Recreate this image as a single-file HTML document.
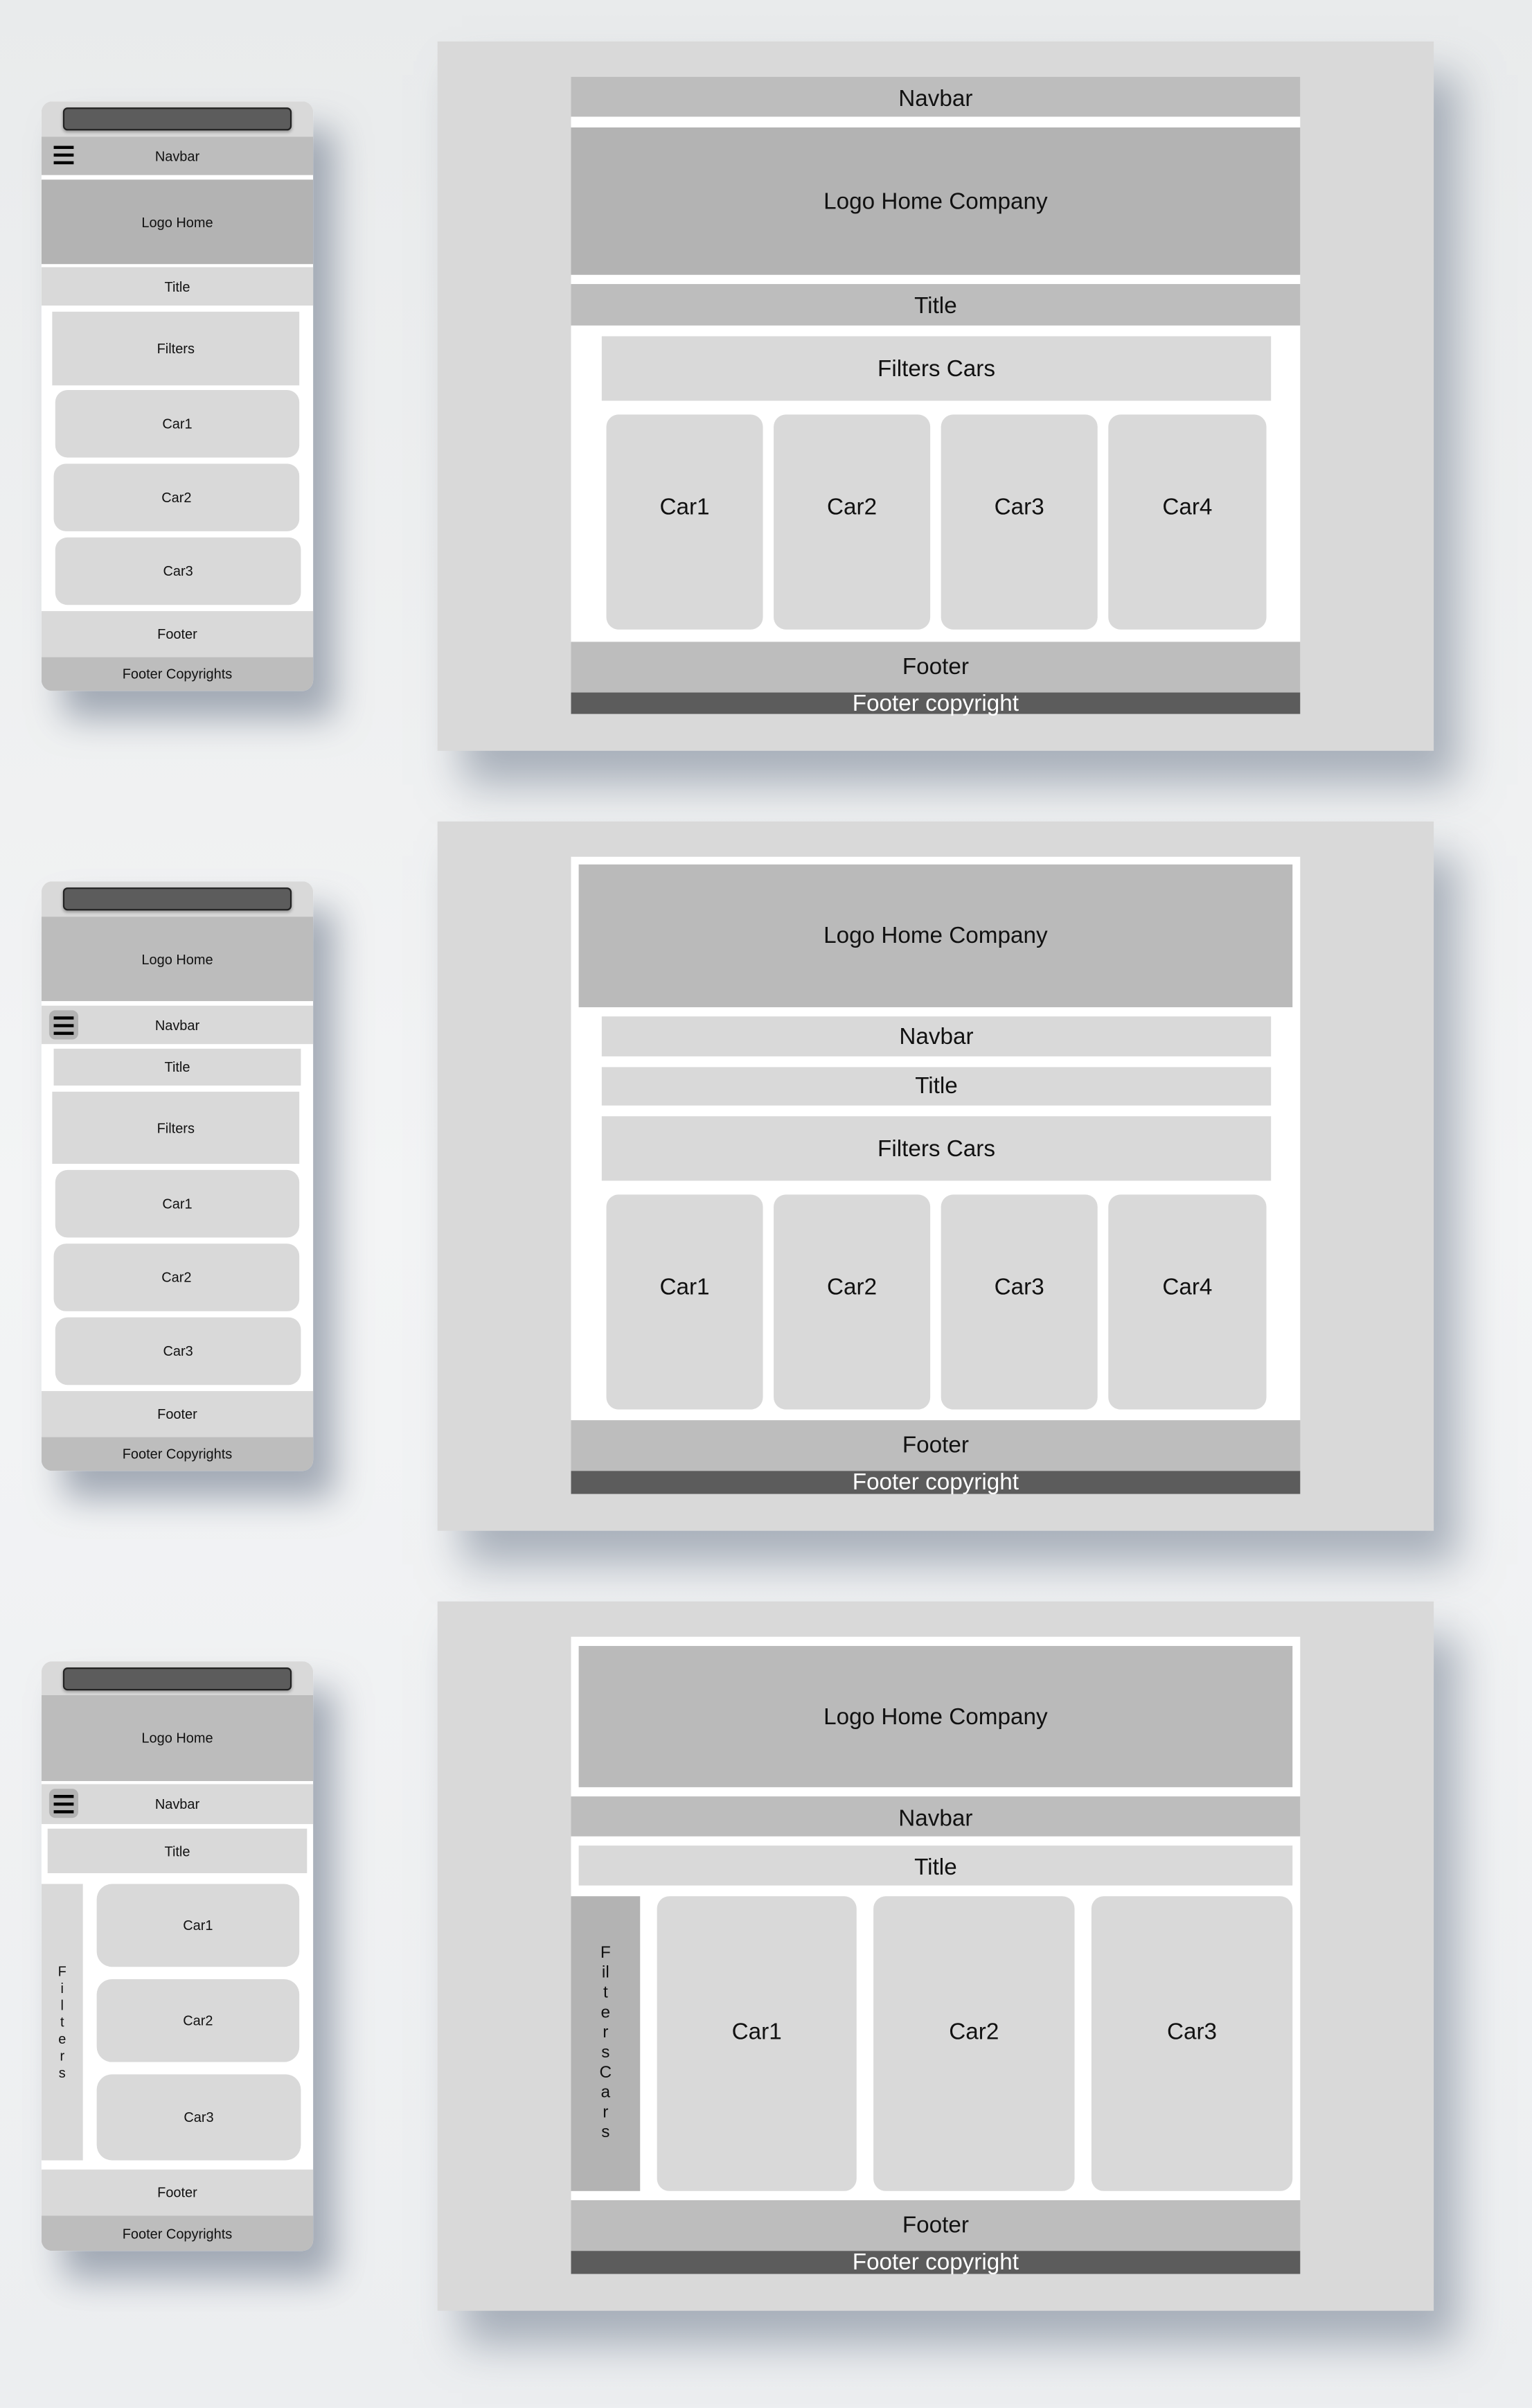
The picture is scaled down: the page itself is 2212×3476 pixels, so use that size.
<!DOCTYPE html>
<html><head><meta charset="utf-8"><style>
html,body{margin:0;padding:0;}
body{width:2212px;height:3476px;overflow:hidden;background:#eef0f1;font-family:"Liberation Sans",sans-serif;}
#s{position:absolute;left:0;top:0;width:998px;height:1568px;transform:scale(2.2164);transform-origin:0 0;background:linear-gradient(180deg,#e9ebec,#f3f4f5 50%,#eceef0);}
.a{position:absolute;box-sizing:border-box;display:flex;align-items:center;justify-content:center;color:#111;}
.m{font-size:9px;}
.d{font-size:15px;}
.ph{position:absolute;background:#fff;border-radius:7px;overflow:hidden;box-shadow:14px 18px 22px rgba(110,122,140,.6);}
.dk{position:absolute;background:#d9d9d9;box-shadow:16px 22px 26px rgba(110,122,140,.55);}
.g1{background:#d9d9d9}.g2{background:#bdbdbd}.g3{background:#b3b3b3}
.pill{position:absolute;left:14px;top:4px;width:149px;height:15px;background:#5c5c5c;border:1px solid #222;border-radius:3px;box-sizing:border-box;box-shadow:0 1px 2px rgba(0,0,0,.3);}
.hb{position:absolute;left:5px;top:3px;width:19px;height:19px;border-radius:4px;}
.hb i{position:absolute;left:3px;width:13px;height:1.5px;background:#000;}
.r{border-radius:8px;}
.c1{padding-bottom:20px;}
.c3{padding-bottom:15px;}
.cp{background:#5c5c5c;color:#fff;}
</style></head><body><div id="s">

<!-- Mobile 1 -->
<div class="ph" style="left:27px;top:66px;width:177px;height:384px;">
<div class="a g1" style="left:0;top:0;width:177px;height:23px;"></div><div class="pill"></div>
<div class="a g2 m" style="left:0;top:23px;width:177px;height:25px;">Navbar</div>
<div class="hb g2" style="left:5px;top:25px;"><i style="top:4px"></i><i style="top:9px"></i><i style="top:14px"></i></div>
<div class="a g3 m" style="left:0;top:51px;width:177px;height:55px;">Logo Home</div>
<div class="a g1 m" style="left:0;top:108px;width:177px;height:25px;">Title</div>
<div class="a g1 m" style="left:7px;top:137px;width:161px;height:48px;">Filters</div>
<div class="a g1 m r" style="left:9px;top:188px;width:159px;height:44px;">Car1</div>
<div class="a g1 m r" style="left:8px;top:236px;width:160px;height:44px;">Car2</div>
<div class="a g1 m r" style="left:9px;top:284px;width:160px;height:44px;">Car3</div>
<div class="a g1 m" style="left:0;top:332px;width:177px;height:30px;">Footer</div>
<div class="a g2 m" style="left:0;top:362px;width:177px;height:22px;">Footer Copyrights</div>
</div>

<!-- Desktop 1 -->
<div class="dk" style="left:285px;top:27px;width:649px;height:462px;">
<div class="a" style="left:87px;top:23px;width:475px;height:415px;background:#fff;"></div>
<div class="a g2 d" style="left:87px;top:23px;width:475px;height:26px;padding-top:2px;">Navbar</div>
<div class="a g3 d" style="left:87px;top:56px;width:475px;height:96px;">Logo Home Company</div>
<div class="a g2 d" style="left:87px;top:158px;width:475px;height:27px;padding-top:2px;">Title</div>
<div class="a g1 d" style="left:107px;top:192px;width:436px;height:42px;">Filters Cars</div>
<div class="a g1 d r c1" style="left:110px;top:243px;width:102px;height:140px;">Car1</div>
<div class="a g1 d r c1" style="left:219px;top:243px;width:102px;height:140px;">Car2</div>
<div class="a g1 d r c1" style="left:328px;top:243px;width:102px;height:140px;">Car3</div>
<div class="a g1 d r c1" style="left:437px;top:243px;width:103px;height:140px;">Car4</div>
<div class="a g2 d" style="left:87px;top:391px;width:475px;height:33px;">Footer</div>
<div class="a cp d" style="left:87px;top:424px;width:475px;height:14px;">Footer copyright</div>
</div>

<!-- Mobile 2 -->
<div class="ph" style="left:27px;top:574px;width:177px;height:384px;">
<div class="a g1" style="left:0;top:0;width:177px;height:23px;"></div><div class="pill"></div>
<div class="a m" style="left:0;top:23px;width:177px;height:55px;background:#bcbcbc;">Logo Home</div>
<div class="a g1 m" style="left:0;top:81px;width:177px;height:25px;">Navbar</div>
<div class="hb g3" style="left:5px;top:84px;"><i style="top:4px"></i><i style="top:9px"></i><i style="top:14px"></i></div>
<div class="a g1 m" style="left:8px;top:109px;width:161px;height:24px;">Title</div>
<div class="a g1 m" style="left:7px;top:137px;width:161px;height:47px;">Filters</div>
<div class="a g1 m r" style="left:9px;top:188px;width:159px;height:44px;">Car1</div>
<div class="a g1 m r" style="left:8px;top:236px;width:160px;height:44px;">Car2</div>
<div class="a g1 m r" style="left:9px;top:284px;width:160px;height:44px;">Car3</div>
<div class="a g1 m" style="left:0;top:332px;width:177px;height:30px;">Footer</div>
<div class="a g2 m" style="left:0;top:362px;width:177px;height:22px;">Footer Copyrights</div>
</div>

<!-- Desktop 2 -->
<div class="dk" style="left:285px;top:535px;width:649px;height:462px;">
<div class="a" style="left:87px;top:23px;width:475px;height:367px;background:#fff;"></div>
<div class="a d" style="left:92px;top:28px;width:465px;height:93px;background:#bababa;">Logo Home Company</div>
<div class="a g1 d" style="left:107px;top:127px;width:436px;height:26px;">Navbar</div>
<div class="a g1 d" style="left:107px;top:160px;width:436px;height:25px;">Title</div>
<div class="a g1 d" style="left:107px;top:192px;width:436px;height:42px;">Filters Cars</div>
<div class="a g1 d r c1" style="left:110px;top:243px;width:102px;height:140px;">Car1</div>
<div class="a g1 d r c1" style="left:219px;top:243px;width:102px;height:140px;">Car2</div>
<div class="a g1 d r c1" style="left:328px;top:243px;width:102px;height:140px;">Car3</div>
<div class="a g1 d r c1" style="left:437px;top:243px;width:103px;height:140px;">Car4</div>
<div class="a g2 d" style="left:87px;top:390px;width:475px;height:33px;">Footer</div>
<div class="a cp d" style="left:87px;top:423px;width:475px;height:15px;">Footer copyright</div>
</div>

<!-- Mobile 3 -->
<div class="ph" style="left:27px;top:1082px;width:177px;height:384px;">
<div class="a g1" style="left:0;top:0;width:177px;height:22px;"></div><div class="pill"></div>
<div class="a m" style="left:0;top:22px;width:177px;height:56px;background:#bcbcbc;">Logo Home</div>
<div class="a g1 m" style="left:0;top:80px;width:177px;height:26px;">Navbar</div>
<div class="hb g3" style="left:5px;top:83px;"><i style="top:4px"></i><i style="top:9px"></i><i style="top:14px"></i></div>
<div class="a g1 m" style="left:4px;top:109px;width:169px;height:29px;">Title</div>
<div class="a g1 m" style="left:0;top:145px;width:27px;height:180px;flex-direction:column;line-height:11px;text-align:center;"><span>F<br>i<br>l<br>t<br>e<br>r<br>s</span></div>
<div class="a g1 m" style="left:36px;top:145px;width:132px;height:54px;border-radius:10px;">Car1</div>
<div class="a g1 m" style="left:36px;top:207px;width:132px;height:54px;border-radius:10px;">Car2</div>
<div class="a g1 m" style="left:36px;top:269px;width:133px;height:56px;border-radius:10px;">Car3</div>
<div class="a g1 m" style="left:0;top:331px;width:177px;height:30px;">Footer</div>
<div class="a g2 m" style="left:0;top:361px;width:177px;height:23px;">Footer Copyrights</div>
</div>

<!-- Desktop 3 -->
<div class="dk" style="left:285px;top:1043px;width:649px;height:462px;">
<div class="a" style="left:87px;top:23px;width:475px;height:367px;background:#fff;"></div>
<div class="a d" style="left:92px;top:29px;width:465px;height:92px;background:#bababa;">Logo Home Company</div>
<div class="a g2 d" style="left:87px;top:127px;width:475px;height:26px;padding-top:2px;">Navbar</div>
<div class="a g1 d" style="left:92px;top:159px;width:465px;height:26px;padding-top:2px;">Title</div>
<div class="a g3" style="left:87px;top:192px;width:45px;height:192px;font-size:11px;line-height:13px;text-align:center;"><span>F<br>il<br>t<br>e<br>r<br>s<br>C<br>a<br>r<br>s</span></div>
<div class="a g1 d r c3" style="left:143px;top:192px;width:130px;height:192px;">Car1</div>
<div class="a g1 d r c3" style="left:284px;top:192px;width:131px;height:192px;">Car2</div>
<div class="a g1 d r c3" style="left:426px;top:192px;width:131px;height:192px;">Car3</div>
<div class="a g2 d" style="left:87px;top:390px;width:475px;height:33px;">Footer</div>
<div class="a cp d" style="left:87px;top:423px;width:475px;height:15px;">Footer copyright</div>
</div>

</div></body></html>
